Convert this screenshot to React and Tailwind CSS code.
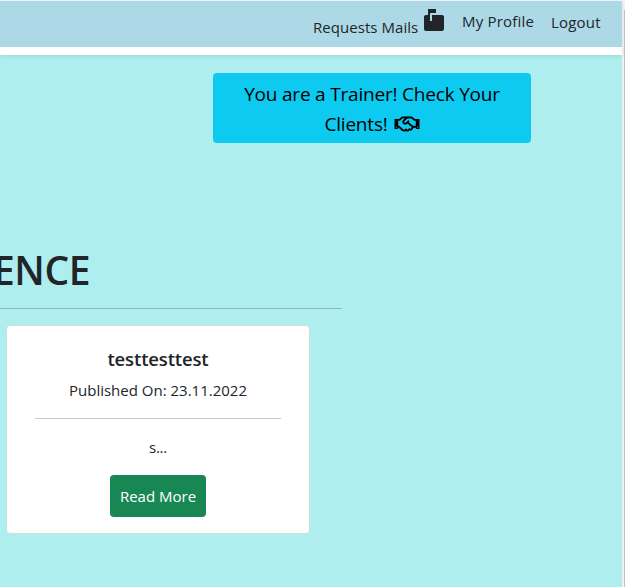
import { MdMarkunreadMailbox } from "react-icons/md";
import { FaRegHandshake } from "react-icons/fa";

export default function App() {
  return (
    <div className="flex h-[587px] w-[625px] overflow-hidden bg-[#f1f1f1] font-['Open_Sans','Noto_Sans',sans-serif] text-[15px] leading-6 text-[#212529]">
      <div className="flex w-[622px] flex-col bg-[#afeeee]">
        <header className="z-10 h-[55px] shrink-0 border-t border-[#e9f4f8] bg-white shadow-[0_2px_4px_rgba(0,0,0,0.075)]">
          <nav className="flex h-[46px] items-start bg-[#add8e6] pl-[313px] whitespace-nowrap">
            <a className="flex w-[149px] items-start gap-1 pt-[7px]">
              <span className="w-[105px] pt-[7px] tracking-[0.05px]">Requests Mails</span>
              <MdMarkunreadMailbox className="mt-px size-6 shrink-0" />
            </a>
            <a className="w-[89px] pt-[8px] tracking-[0.2px]">My Profile</a>
            <a className="pt-[9px] tracking-[0.2px]">Logout</a>
          </nav>
        </header>
        <main className="flex grow flex-col items-start pt-[18px]">
          <button className="ml-[213px] h-[70px] w-[318px] rounded-[4px] bg-[#0dcaf0] pt-[2px] text-[19px] leading-[30px] text-black">
            <span className="block tracking-[-0.2px]">You are a Trainer! Check Your</span>
            <span className="flex items-center justify-center gap-[6px]">
              <span className="tracking-[-0.2px]">Clients!</span>
              <FaRegHandshake className="h-5 w-[26px]" />
            </span>
          </button>
          <h1 className="-ml-[7px] mt-[103px] h-[48px] text-[39px] leading-[48px] font-semibold tracking-[-0.4px]">ENCE</h1>
          <hr className="mt-[14px] w-[342px] border-[#8bbabb]" />
          <article className="mt-4 ml-[6px] flex h-[209px] w-[304px] flex-col items-center rounded-[4px] border border-[#cfdfdf] bg-white">
            <h5 className="mt-[21px] text-[18.5px] leading-6 font-semibold tracking-[-0.15px]">testtesttest</h5>
            <p className="mt-[7px]">Published On: 23.11.2022</p>
            <hr className="mt-4 w-[246px] border-[#c8c9ca]" />
            <p className="mt-[16px] tracking-[-0.3px]">s...</p>
            <button className="mt-[16px] h-[42px] w-24 shrink-0 rounded-[4px] bg-[#198754] text-white">Read More</button>
          </article>
        </main>
      </div>
      <div className="flex w-[3px] justify-end pt-[10px]">
        <div className="w-px bg-[#c1c1c1]" />
      </div>
    </div>
  );
}
